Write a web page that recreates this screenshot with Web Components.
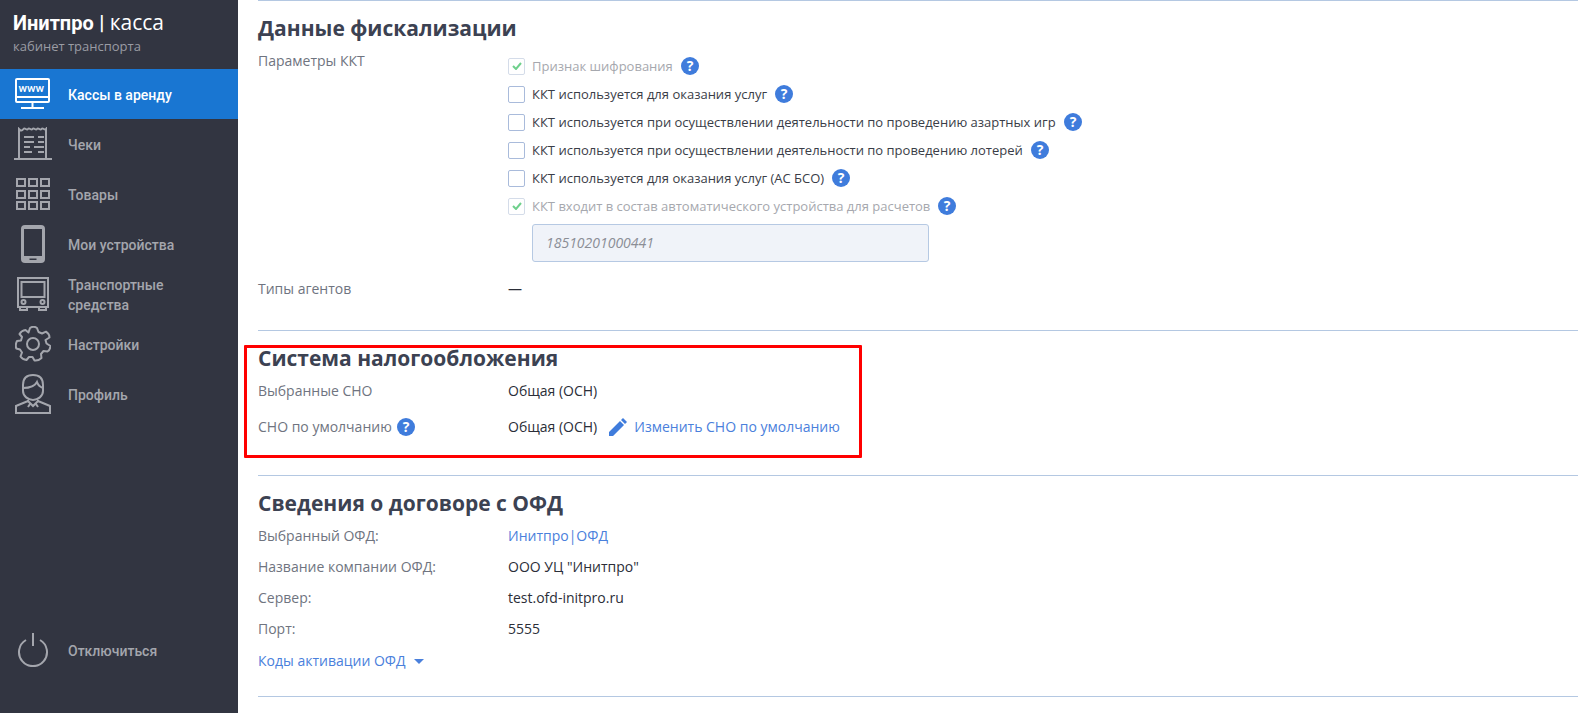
<!DOCTYPE html>
<html lang="ru"><head><meta charset="utf-8"><title>Инитпро | касса</title>
<style>
html,body{margin:0;height:100%;overflow:hidden;background:#fff}
body{font:14px/20px "Open Sans",sans-serif;color:#3c3f4a}
</style></head><body>
<app-shell>
  <side-bar slot="side">
    <nav-item active>
      <svg slot="icon" viewBox="0 0 36 32" width="36" height="32" fill="none" stroke="currentColor" stroke-width="2"><rect x="1" y="1" width="33" height="23" rx="1"/><path d="M1 19h33M17.500 24v5M6 30h23"/><text x="3.500" y="14" font-family="Roboto" font-size="11.500" font-weight="500" fill="currentColor" stroke="none">www</text></svg>
      Кассы в аренду</nav-item>
    <nav-item>
      <svg slot="icon" viewBox="0 0 40 34" width="40" height="34" fill="none" stroke="currentColor" stroke-width="2"><path d="M6 32V2c2 2 3 2 4.500 0s3 2 4.500 0 3 2 4.500 0 3 2 4.500 0 3 2 4.500 0 3 2 4.500 0V32M1 32h38M11 10h10M25 10h6M11 15h10M25 15h6M11 20h6M21 20h10M11 25h8M25 25h6"/></svg>
      Чеки</nav-item>
    <nav-item>
      <svg slot="icon" viewBox="0 0 36 34" width="36" height="34" fill="none" stroke="currentColor" stroke-width="2"><rect x="2" y="2" width="8" height="7"/><rect x="14" y="2" width="8" height="7"/><rect x="26" y="2" width="8" height="7"/><rect x="2" y="14" width="8" height="7"/><rect x="14" y="14" width="8" height="7"/><rect x="26" y="14" width="8" height="7"/><rect x="2" y="25" width="8" height="7"/><rect x="14" y="25" width="8" height="7"/><rect x="26" y="25" width="8" height="7"/></svg>
      Товары</nav-item>
    <nav-item>
      <svg slot="icon" viewBox="0 0 24 38" width="24" height="38"><rect width="24" height="38" rx="4" fill="currentColor"/><rect x="3" y="4" width="18" height="27" fill="#323541"/><rect x="8.500" y="33.500" width="7" height="1.500" fill="#323541"/></svg>
      Мои устройства</nav-item>
    <nav-item>
      <svg slot="icon" viewBox="0 0 32 34" width="32" height="34" fill="none" stroke="currentColor" stroke-width="2"><rect x="1" y="1" width="30" height="29"/><rect x="4.500" y="5" width="23" height="15"/><circle cx="6.500" cy="25" r="2"/><circle cx="25.500" cy="25" r="2"/><path d="M3 30v3h7v-3M22 30v3h7v-3"/></svg>
      Транспортные<br>средства</nav-item>
    <nav-item>
      <svg slot="icon" viewBox="0 0 36 36" width="36" height="36" fill="none" stroke="currentColor" stroke-width="2" stroke-linejoin="round"><circle cx="18" cy="18" r="6"/><path d="M14.500 2.500Q18 0 21.500 2.500L23 6.500 26.500 8 30.500 6.200Q34 8.500 34 12L30 14.500 31 18 35 20.500Q34.500 24.500 32 26L28 25.500 25.500 28.500 26 32.500Q23 35.500 19 35L17 31.500H13.500L11 34.500Q7 34 5 31L6.500 27 4.500 24 .8 23Q-.5 19 1.500 15.500L5.500 15 6.500 11.500 4 8.500Q6 5 10 4.500L13 7z" transform="translate(.5 -.5)"/></svg>
      Настройки</nav-item>
    <nav-item>
      <svg slot="icon" viewBox="0 0 38 40" width="38" height="40" fill="none" stroke="currentColor" stroke-width="2"><path d="M9 11C9 4 13 1 19 1s10 3 10 10v6c0 5-5 9-10 9s-10-4-10-9zM9 14c6 0 12-2 14-6 1 3 3 5 6 6M14 24v3l5 5 5-5v-3M14 27L2 32v7h34v-7l-12-5M16 30l-2 3M22 30l2 3"/></svg>
      Профиль</nav-item>
    <nav-item slot="bottom">
      <svg slot="icon" viewBox="0 0 32 34" width="32" height="34" fill="none" stroke="currentColor" stroke-width="2"><path d="M16 0v13M9 7A14 14 0 1 0 23 7"/></svg>
      Отключиться</nav-item>
  </side-bar>

  <data-section top title="Данные фискализации">
    <data-row label="Параметры ККТ" wide>
      <check-item checked disabled>Признак шифрования</check-item>
      <check-item>ККТ используется для оказания услуг</check-item>
      <check-item>ККТ используется при осуществлении деятельности по проведению азартных игр</check-item>
      <check-item>ККТ используется при осуществлении деятельности по проведению лотерей</check-item>
      <check-item>ККТ используется для оказания услуг (АС БСО)</check-item>
      <check-item checked disabled>ККТ входит в состав автоматического устройства для расчетов</check-item>
      <num-field>18510201000441</num-field>
    </data-row>
    <data-row label="Типы агентов" agent>—</data-row>
  </data-section>

  <data-section marked title="Система налогообложения">
    <data-row label="Выбранные СНО" tall>Общая (ОСН)</data-row>
    <data-row label="СНО по умолчанию" help tall>Общая (ОСН)<edit-link>Изменить СНО по умолчанию</edit-link></data-row>
  </data-section>

  <data-section title="Сведения о договоре с ОФД">
    <data-row label="Выбранный ОФД:"><a-link>Инитпро|ОФД</a-link></data-row>
    <data-row label="Название компании ОФД:">ООО УЦ "Инитпро"</data-row>
    <data-row label="Сервер:">test.ofd-initpro.ru</data-row>
    <data-row label="Порт:">5555</data-row>
    <drop-link>Коды активации ОФД</drop-link>
  </data-section>
</app-shell>

<script>
function def(name, css, html){
  customElements.define(name, class extends HTMLElement{
    constructor(){super();this.attachShadow({mode:'open'});if(typeof html!=='function')this.shadowRoot.innerHTML='<style>'+css+'</style>'+html;}
    connectedCallback(){ if(typeof html==='function') this.shadowRoot.innerHTML='<style>'+css+'</style>'+html(this); }
  });
}
const HELP='<svg class="q" viewBox="0 0 18 18" width="18" height="18"><circle cx="9" cy="9" r="9" fill="#3f7cdc"/><text x="9" y="14" text-anchor="middle" font-family="Open Sans" font-size="14" font-weight="700" fill="#fff">?</text></svg>';

def('app-shell',`:host{display:flex;height:713px;width:1582px;overflow:hidden}
 main{flex:1;min-width:0;padding-left:20px;padding-right:4px}`,
 `<slot name="side"></slot><main><slot></slot></main>`);

def('side-bar',`:host{display:flex;flex-direction:column;width:238px;flex:none;height:713px;background:#323541;color:#a4a6ad}
 .logo{height:69px;box-sizing:border-box;padding:9px 0 0 13px;color:#fff;font:400 21px/27px "Open Sans",sans-serif;white-space:nowrap}
 .logo b{font:700 20px/27px Roboto,sans-serif}
 .logo small{display:block;font:400 13px/16px "Open Sans",sans-serif;color:#9a9ca4;margin-top:1px}
 .bottom{margin-top:auto;margin-bottom:38px}`,
 `<div class="logo"><b>Инитпро</b> <b>|</b> касса<small>кабинет транспорта</small></div><slot></slot><div class="bottom"><slot name="bottom"></slot></div>`);

def('nav-item',`:host{display:flex;align-items:center;height:50px;color:#a4a6ad;font:500 14px/20px Roboto,sans-serif}
 :host([active]){background:#1976d2;color:#fff}
 .i{width:68px;flex:none;display:flex;justify-content:center;box-sizing:border-box;padding-right:2px}
 .t{padding-top:2px}`,
 `<span class="i"><slot name="icon"></slot></span><span class="t"><slot></slot></span>`);

def('data-section',`:host{display:block;border-top:1px solid #b4c8e2;position:relative}
 :host([top]){height:329px}
 :host([marked]){height:144px}
 :host(:not([top]):not([marked])){height:220px;border-bottom:1px solid #b4c8e2}
 h2{margin:0;font:700 21px/28px "Open Sans",sans-serif;color:#3c4252;padding-top:13px;margin-bottom:4px}
 :host([marked]) .mark{display:block}
 .mark{display:none;position:absolute;left:-14px;top:14px;width:612px;height:107px;border:3px solid #f00;border-radius:1px;pointer-events:none}`,
 h=>`<h2>${h.getAttribute('title')}</h2><slot></slot><div class="mark"></div>`);

def('data-row',`:host{display:flex;align-items:flex-start;min-height:31px}
 :host([tall]){min-height:36px}
 :host([agent]){margin-top:12px}
 .l{width:250px;flex:none;color:#6f7480;line-height:20px;padding-top:5px;display:flex;align-items:center;gap:5px;height:20px}
 .v{color:#2b2e38;padding-top:5px;display:flex;align-items:center}
 .q{flex:none}`,
 h=>`<div class="l">${h.getAttribute('label')}${h.hasAttribute('help')?HELP:''}</div><div class="v"${h.hasAttribute('wide')?' style="display:block;padding-top:6px"':''}><slot></slot></div>`);

def('check-item',`:host{display:flex;align-items:center;height:28px;color:#3a3d47;font-size:13px}
 :host([disabled]){color:#a6a8ae}
 .b{width:15px;height:15px;border:1px solid #a9bbdb;border-radius:2px;margin-right:7px;flex:none;display:flex;align-items:center;justify-content:center;background:#fff}
 :host([disabled]) .b{border-color:#d4dce9}
 .q{margin-left:8px}`,
 h=>`<span class="b">${h.hasAttribute('checked')?'<svg viewBox="0 0 10 8" width="10" height="8"><path d="M1 4l3 3 5-6" fill="none" stroke="#6fd08c" stroke-width="2"/></svg>':''}</span><span><slot></slot></span>${HELP}`);

def('num-field',`:host{display:flex;align-items:center;box-sizing:border-box;margin:4px 0 0 24px;width:397px;height:38px;border:1px solid #b6c9e3;border-radius:3px;background:#f0f3f9;padding-left:13px;color:#8b8e96;font-style:italic}`,`<slot></slot>`);

def('a-link',`:host{color:#4a80dc}`,`<slot></slot>`);

def('edit-link',`:host{display:inline-flex;align-items:center;color:#4a80dc;margin-left:12px}
 svg{margin-right:7px}`,`<svg viewBox="0 0 18 18" width="18" height="18"><path d="M0 18v-4L11 3l4 4L4 18zM12 2l2-2 4 4-2 2z" fill="#3f7cdc"/></svg><slot></slot>`);

def('drop-link',`:host{display:flex;align-items:center;color:#4a80dc;margin-top:5px;height:22px}
 i{display:block;margin-left:8px;border:5px solid transparent;border-top-color:#4a80dc;border-bottom:0}`,`<slot></slot><i></i>`);
</script>
</body></html>
